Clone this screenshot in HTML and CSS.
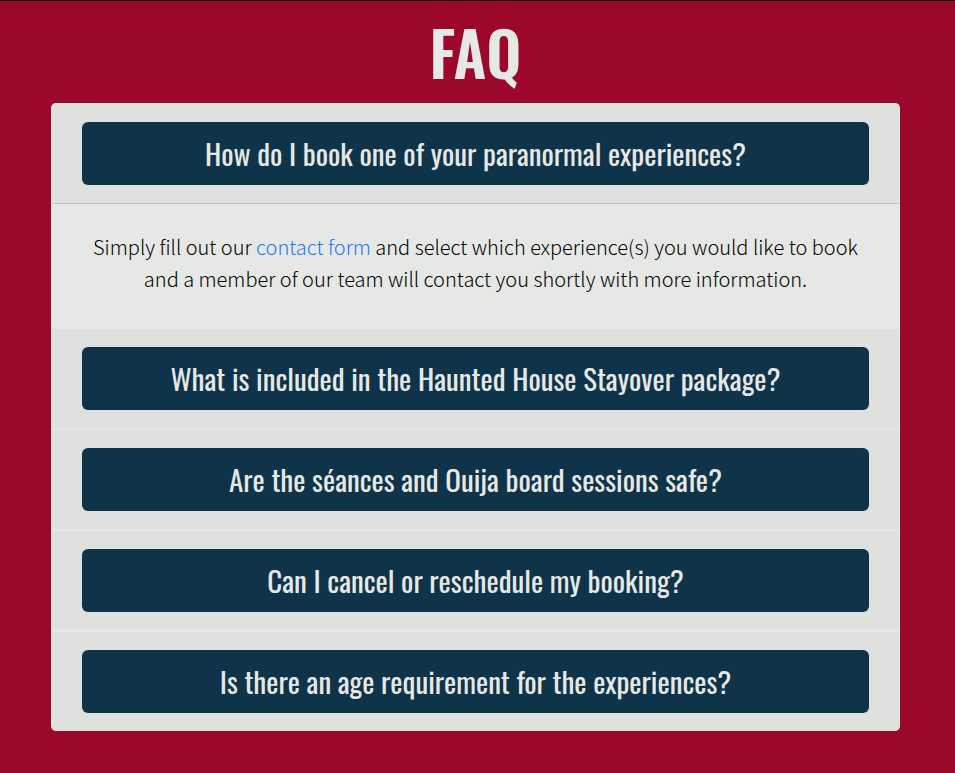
FILE: index.html
```html
<!DOCTYPE html>
<html lang="en">
<head>
<meta charset="utf-8">
<meta name="viewport" content="width=device-width, initial-scale=1">
<title>FAQ</title>
<link rel="stylesheet" href="styles.css">
</head>
<body>
<main class="faq">
  <h1 class="faq-title">FAQ</h1>
  <div class="accordion">
    <section class="card">
      <h2 class="card-header"><button class="question" type="button" aria-expanded="true" aria-controls="answer-booking">How do I book one of your paranormal experiences?</button></h2>
      <div class="card-body" id="answer-booking">
        <p class="answer">Simply fill out our <a class="link" href="#contact">contact form</a> and select which experience(s) you would like to book and a member of our team will contact you shortly with more information.</p>
      </div>
    </section>
    <section class="card">
      <h2 class="card-header"><button class="question" type="button" aria-expanded="false">What is included in the Haunted House Stayover package?</button></h2>
    </section>
    <section class="card">
      <h2 class="card-header"><button class="question" type="button" aria-expanded="false">Are the séances and Ouija board sessions safe?</button></h2>
    </section>
    <section class="card">
      <h2 class="card-header"><button class="question" type="button" aria-expanded="false">Can I cancel or reschedule my booking?</button></h2>
    </section>
    <section class="card">
      <h2 class="card-header"><button class="question" type="button" aria-expanded="false">Is there an age requirement for the experiences?</button></h2>
    </section>
  </div>
</main>
</body>
</html>
```
FILE: styles.css
```css
* {
  box-sizing: border-box;
}

body {
  margin: 0;
  min-height: 100vh;
  border-top: 1px solid #000;
  background: #9b082a;
  color: #000;
  font-family: "Source Sans Pro", "Noto Sans CJK SC", sans-serif;
}

.faq {
  padding: 15px 55px 42px 51px;
}

.faq-title {
  margin: 0 0 15px;
  color: #e6e8e5;
  font-family: Oswald, sans-serif;
  font-size: 61px;
  font-weight: 600;
  line-height: 72px;
  text-align: center;
}

.accordion {
  overflow: hidden;
  border: 1px solid #e6e8e5;
  border-bottom: 0;
  border-radius: 5px;
  background: #e6e8e5;
}

.card + .card {
  border-top: 2px solid #e6e8e5;
}

.card-header {
  margin: 0;
  padding: 18px 30px;
  background: #dfe1de;
}

.question {
  display: block;
  width: 100%;
  padding: 7px 12px 9px;
  border: 0;
  border-radius: 6px;
  background: #0f3349;
  color: #e6e8e5;
  font-family: Oswald, sans-serif;
  font-size: 29px;
  line-height: 47px;
}

.card-body {
  padding: 27px 30px 32px;
  border-top: 1px solid #c4c6c3;
}

.answer {
  margin: 0;
  font-size: 20px;
  font-weight: 300;
  line-height: 32px;
  text-align: center;
}

.link {
  color: #1a7aff;
  text-decoration: none;
}
```
